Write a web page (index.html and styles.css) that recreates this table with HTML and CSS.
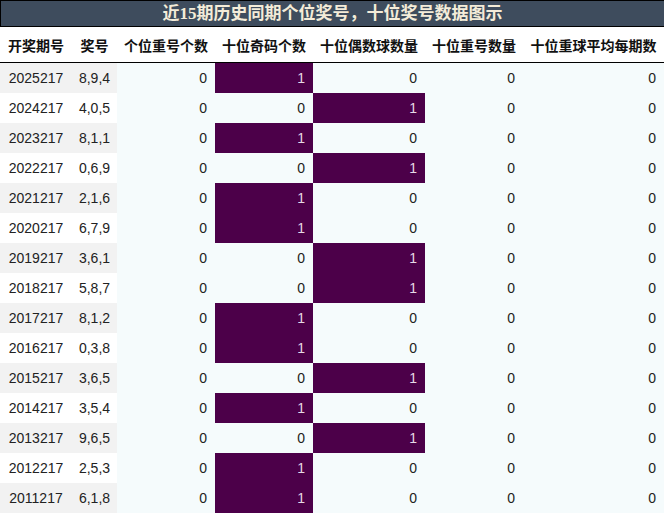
FILE: index.html
```html
<!DOCTYPE html>
<html lang="zh">
<head>
<meta charset="utf-8">
<link rel="stylesheet" href="styles.css">
</head>
<body>
<div class="wrap">
  <div class="title">近15期历史同期个位奖号，十位奖号数据图示</div>
  <div class="grid head">
    <div>开奖期号</div><div>奖号</div><div>个位重号个数</div><div>十位奇码个数</div><div>十位偶数球数量</div><div>十位重号数量</div><div>十位重球平均每期数</div>
  </div>
  <div id="rows"></div>
</div>
<script>
const data = [
 ["2025217","8,9,4",1],["2024217","4,0,5",0],["2023217","8,1,1",1],["2022217","0,6,9",0],
 ["2021217","2,1,6",1],["2020217","6,7,9",1],["2019217","3,6,1",0],["2018217","5,8,7",0],
 ["2017217","8,1,2",1],["2016217","0,3,8",1],["2015217","3,6,5",0],["2014217","3,5,4",1],
 ["2013217","9,6,5",0],["2012217","2,5,3",1],["2011217","6,1,8",1]];
const rows = document.getElementById('rows');
data.forEach((d,i)=>{
  const odd = d[2];
  const r = document.createElement('div');
  r.className = 'grid row ' + (i%2===0 ? 'alt' : '');
  r.innerHTML =
   '<div class="key">'+d[0]+'</div><div class="key">'+d[1]+'</div>'+
   '<div class="num">0</div>'+
   '<div class="num '+(odd?'hi':'')+'">'+(odd?1:0)+'</div>'+
   '<div class="num '+(odd?'':'hi')+'">'+(odd?0:1)+'</div>'+
   '<div class="num">0</div><div class="num">0</div>';
  rows.appendChild(r);
});
</script>
</body>
</html>
```
FILE: styles.css
```css
html, body { margin: 0; padding: 0; background: #ffffff; }
.wrap { width: 664px; }
.title {
  height: 25px;
  line-height: 25px;
  background: #3e4c5d;
  color: #f4ecd9;
  border-top: 1px solid #000;
  border-left: 1px solid #000;
  border-bottom: 1px solid #000;
  text-align: center;
  font-family: "Liberation Serif", "Noto Sans CJK SC", serif;
  font-weight: bold;
  font-size: 17px;
}
.grid {
  display: grid;
  grid-template-columns: 72px 45px 98px 98px 112px 98px 141px;
}
.head {
  height: 35px;
  align-items: center;
  border-bottom: 1px solid #000;
  font-family: "Noto Sans CJK SC", sans-serif;
  font-weight: bold;
  font-size: 14px;
  color: #111;
  text-align: center;
  background: #fff;
}
.row {
  height: 30px;
  font-family: "Liberation Sans", "Noto Sans CJK SC", sans-serif;
  font-size: 14px;
  color: #222;
}
.row > div { display: flex; align-items: center; }
.key { justify-content: center; background: #ffffff; }
.row.alt .key { background: #f2f2f2; }
.num { justify-content: flex-end; padding-right: 8px; background: #f5fbfc; }
.num.hi { background: #4c0049; color: #e6d9e6; }
```
